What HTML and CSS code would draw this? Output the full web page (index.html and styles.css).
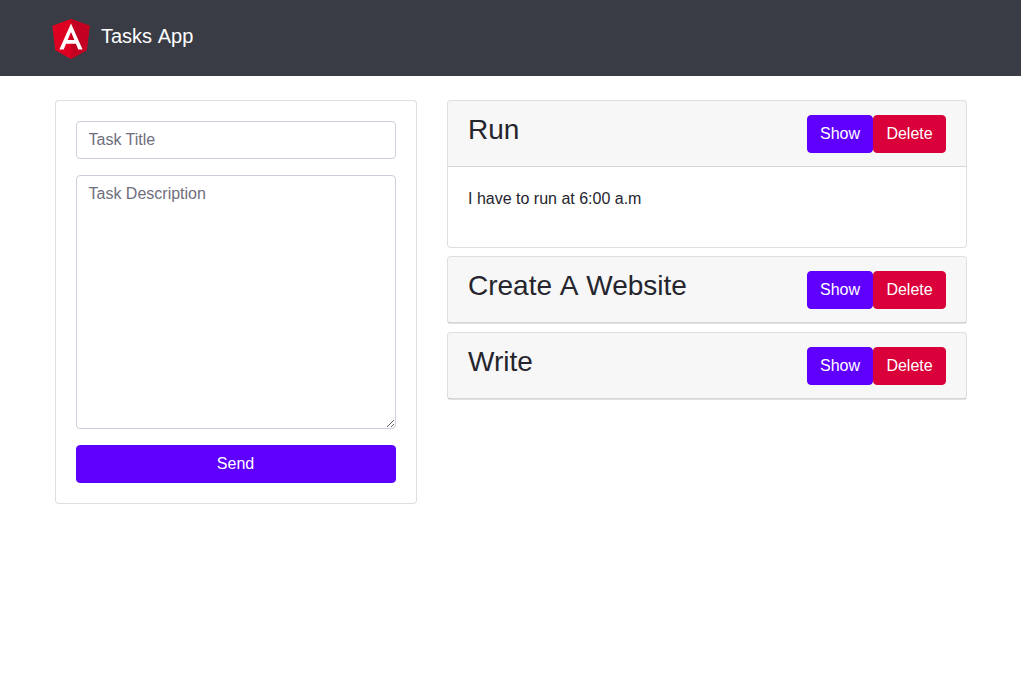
FILE: index.html
```html
<!DOCTYPE html>
<html lang="en">
<head>
<meta charset="utf-8">
<title>Tasks App</title>
<link rel="stylesheet" href="styles.css">
</head>
<body>
<nav class="navbar">
  <a class="brand">
    <svg class="logo" viewBox="0 0 250 250" aria-hidden="true">
      <path fill="#dd0021" d="M125 30 31.900 63.200l14.200 123.100L125 230l78.900-43.700 14.200-123.100z"/>
      <path fill="#c30021" d="M125 30v200l78.900-43.700 14.200-123.100z"/>
      <path fill="#fff" d="M125 52.100 66.800 182.600h21.700l11.700-29.200h49.400l11.700 29.200H183zm17 83.300h-34l17-40.900z"/>
    </svg>
    <span class="brand-name">Tasks App</span>
  </a>
</nav>
<main class="container">
  <form class="card task-form">
    <input class="control" type="text" placeholder="Task Title">
    <textarea class="control area" placeholder="Task Description"></textarea>
    <button class="btn primary" type="button">Send</button>
  </form>
  <section class="tasks">
    <article class="card task">
      <header class="card-header"><h3>Run</h3><div class="actions"><button class="btn primary">Show</button><button class="btn danger">Delete</button></div></header>
      <div class="card-body"><p>I have to run at 6:00 a.m</p></div>
    </article>
    <article class="card task">
      <header class="card-header"><h3>Create A Website</h3><div class="actions"><button class="btn primary">Show</button><button class="btn danger">Delete</button></div></header>
    </article>
    <article class="card task">
      <header class="card-header"><h3>Write</h3><div class="actions"><button class="btn primary">Show</button><button class="btn danger">Delete</button></div></header>
    </article>
  </section>
</main>
</body>
</html>
```
FILE: styles.css
```css
*, *::before, *::after { box-sizing: border-box; }
body { margin: 0; background: #fff; color: #25252d; font: 16px/1.5 "Liberation Sans", Arial, sans-serif; }
h3, p { margin: 0; }
.navbar { height: 76px; padding: 13px 46px; background: #3a3c45; }
.brand { display: flex; align-items: flex-start; color: #fff; font-size: 20px; line-height: 30px; }
.logo { width: 50px; height: 50px; }
.brand-name { margin: 8px 0 0 5px; word-spacing: .055em; }
.container { display: grid; grid-template-columns: 362px 520px; gap: 30px; align-items: start; padding: 24px 0 0 55px; }
.card { border: 1px solid rgba(0,0,0,.125); border-radius: 4px; background: #fff; }
.task-form { display: flex; flex-direction: column; gap: 16px; padding: 20px; }
.control { display: block; width: 100%; height: 38px; margin: 0; padding: 6px 11.5px; border: 1px solid #ceceda; border-radius: 4px; background: #fff; color: #495057; font: inherit; }
.control::placeholder { color: #6e6e7d; opacity: 1; }
.area { height: 254px; resize: vertical; }
.btn { height: 38px; padding: 6px 12px; border: 1px solid transparent; border-radius: 4px; color: #fff; font: inherit; }
.primary { background: #5f00ff; border-color: #5f00ff; }
.danger { background: #da0039; border-color: #da0039; }
.task-form .btn { padding-right: 13px; }
.tasks { display: flex; flex-direction: column; gap: 8px; }
.card-header { display: flex; justify-content: space-between; height: 66px; padding: 12px 20px; background: rgba(0,0,0,.03); border-bottom: 1px solid rgba(0,0,0,.125); border-radius: 3px 3px 0 0; }
h3 { font-size: 28px; font-weight: 500; line-height: 33.6px; word-spacing: .055em; }
.actions { display: flex; padding-top: 2px; }
.actions .primary { width: 66px; }
.actions .danger { width: 73px; }
.card-body { height: 80px; padding: 20px; }
```
